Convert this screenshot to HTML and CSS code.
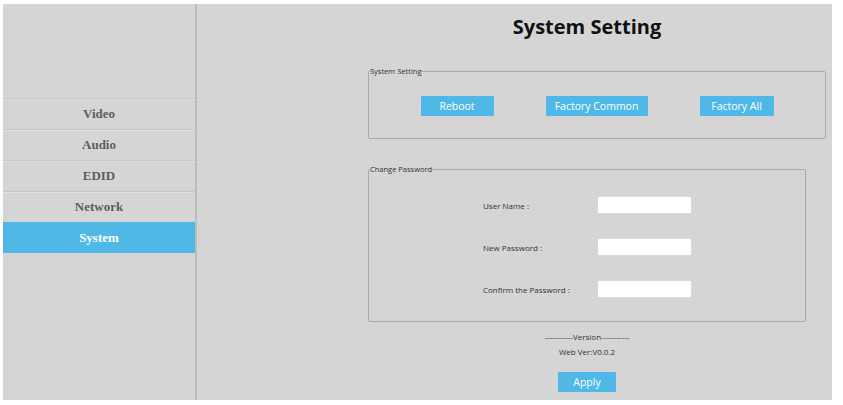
FILE: index.html
```html
<!DOCTYPE html>
<html lang="en">
<head>
    <meta charset="UTF-8">
    <meta name="viewport" content="width=device-width, initial-scale=1.0">
    <title>System Setting</title>
    <link rel="stylesheet" href="styles.css">
</head>
<body>

<div class="page">
    <div class="sidebar">
        <ul class="menu">
            <li class="menu-item">Video</li>
            <li class="menu-item">Audio</li>
            <li class="menu-item">EDID</li>
            <li class="menu-item">Network</li>
            <li class="menu-item active">System</li>
        </ul>
    </div>

    <div class="main">
        <div class="content">
            <h1 class="title">System Setting</h1>

            <fieldset class="box box-system">
                <legend>System Setting</legend>
                <div class="actions">
                    <button class="btn btn-reboot">Reboot</button>
                    <button class="btn btn-common">Factory Common</button>
                    <button class="btn btn-all">Factory All</button>
                </div>
            </fieldset>

            <fieldset class="box box-password">
                <legend>Change Password</legend>
                <div class="form">
                    <label class="form-label" for="user">User Name :</label>
                    <input class="form-input" id="user" type="text">
                    <label class="form-label" for="newpwd">New Password :</label>
                    <input class="form-input" id="newpwd" type="password">
                    <label class="form-label" for="confirmpwd">Confirm the Password :</label>
                    <input class="form-input" id="confirmpwd" type="password">
                </div>
            </fieldset>

            <div class="version">
                <div class="version-title">-----------Version-----------</div>
                <div class="version-text">Web Ver:V0.0.2</div>
            </div>

            <div class="apply-row">
                <button class="btn btn-apply">Apply</button>
            </div>
        </div>
    </div>
</div>

</body>
</html>
```

FILE: styles.css
```css
* {
    box-sizing: border-box;
}
body {
    margin: 0;
    background: #fff;
    font-family: "Open Sans", sans-serif;
}
.page {
    display: flex;
    width: 829px;
    height: 396px;
    margin: 4px 0 0 3px;
    background: #d5d5d5;
}
.sidebar {
    width: 194px;
    border-right: 2px solid #bcbcbc;
    padding-top: 94px;
}
.menu {
    list-style: none;
    margin: 0;
    padding: 0;
}
.menu-item {
    height: 31px;
    line-height: 30px;
    border-top: 1px solid #c6c6c6;
    box-shadow: inset 0 1px 0 #e0e0e0;
    text-align: center;
    font-family: "Liberation Serif", serif;
    font-weight: bold;
    font-size: 13px;
    color: #5e5e5e;
    cursor: pointer;
}
.menu-item.active {
    background: #4fb8e6;
    color: #fff;
    border-top-color: #4fb8e6;
    box-shadow: none;
}
.main {
    flex: 1;
}
.content {
    width: 438px;
    margin-left: 171px;
}
.title {
    margin: 0;
    padding-top: 9px;
    height: 63px;
    text-align: center;
    font-size: 20px;
    font-weight: bold;
    color: #111;
}
.box {
    margin: 0;
    padding: 0;
    border: 1px solid #a9a9a9;
    border-radius: 2px;
}
.box legend {
    margin-left: 1px;
    padding: 0;
    font-size: 7.5px;
    line-height: 9px;
    color: #333;
}
.box-system {
    width: 458px;
    padding: 20px 0 22px;
}
.actions {
    display: flex;
    justify-content: center;
    gap: 52px;
}
.btn {
    height: 20px;
    padding: 0;
    border: none;
    border-radius: 1px;
    background: #4fb8e6;
    color: #fff;
    font-family: "Open Sans", sans-serif;
    font-size: 10.5px;
    cursor: pointer;
}
.btn-reboot { width: 73px; }
.btn-common { width: 102px; }
.btn-all { width: 74px; }
.box-password {
    margin-top: 26px;
    padding: 23px 0 24px;
}
.form {
    display: grid;
    grid-template-columns: 115px 93px;
    row-gap: 26px;
    align-items: center;
    padding-left: 114px;
}
.form-label {
    font-size: 8px;
    color: #333;
}
.form-input {
    width: 93px;
    height: 16px;
    border: none;
    border-radius: 1px;
    background: #fff;
    box-shadow: 0 0 1px #eee;
}
.version {
    margin-top: 9px;
    text-align: center;
    font-size: 8px;
    color: #333;
}
.version-text {
    margin-top: 4px;
}
.apply-row {
    margin-top: 12px;
    text-align: center;
}
.btn-apply {
    width: 58px;
}
```
